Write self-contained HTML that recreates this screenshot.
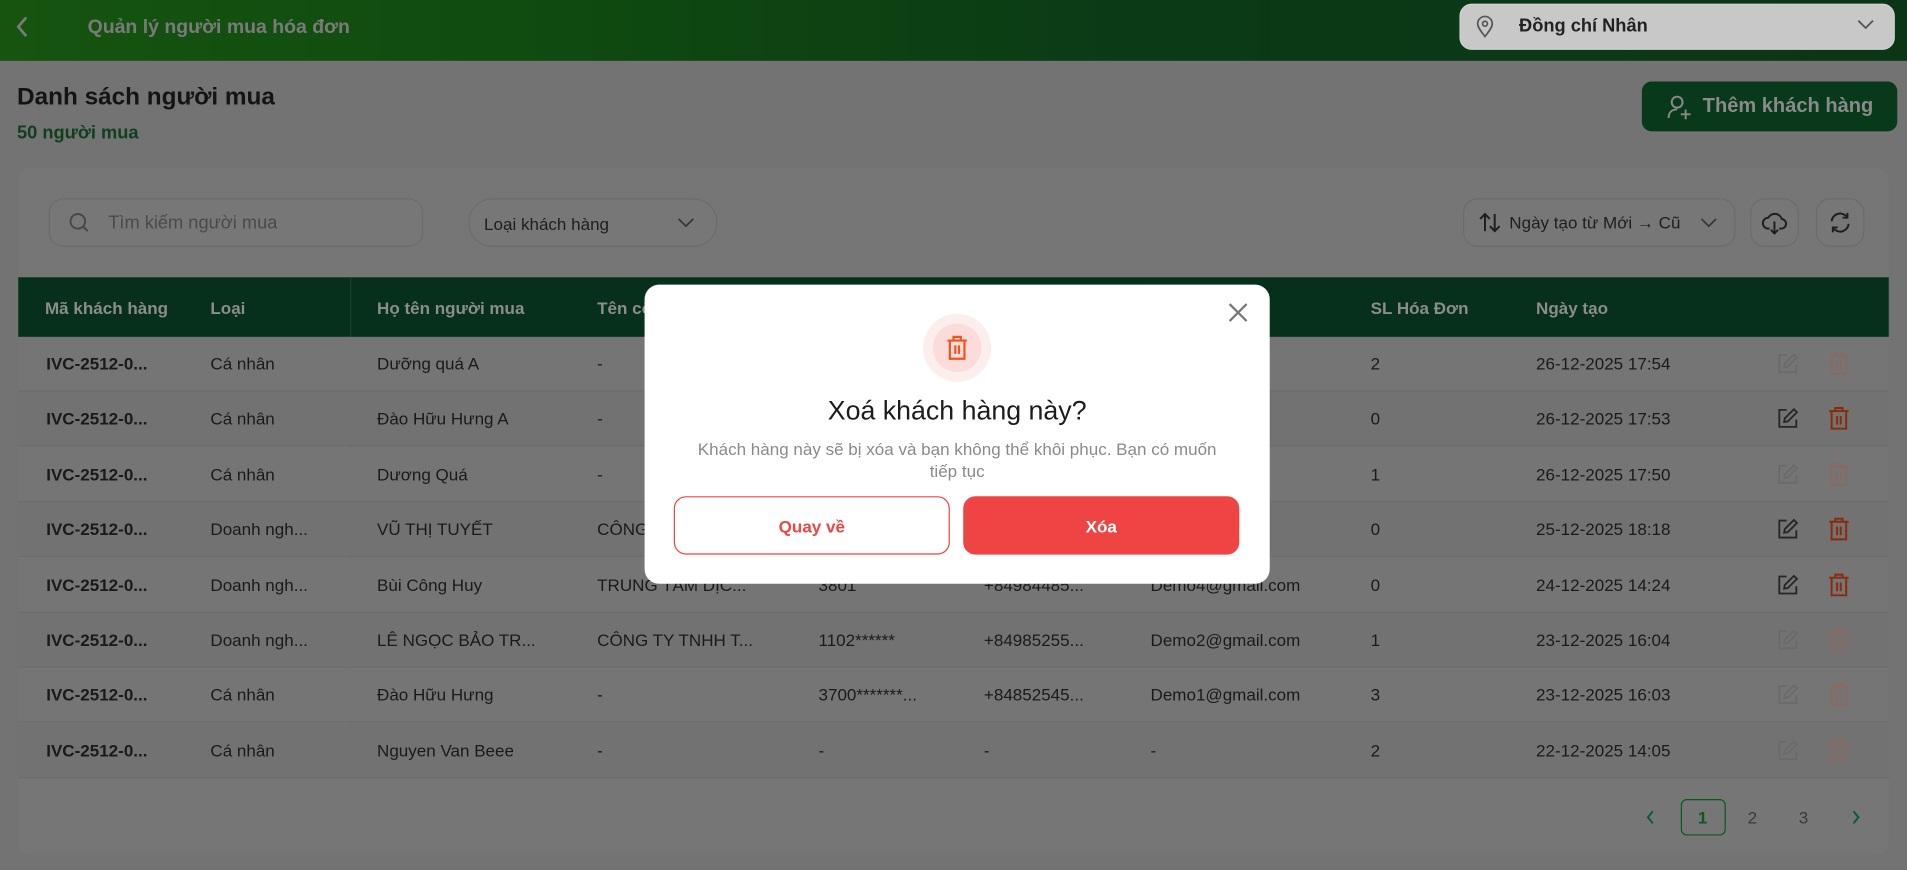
<!DOCTYPE html>
<html><head><meta charset="utf-8"><style>
*{box-sizing:border-box;margin:0;padding:0}
html,body{width:1907px;height:869px;overflow:hidden;background:#737373}
body{font-family:"Liberation Sans","Noto Sans CJK SC",sans-serif}
#s{position:absolute;left:0;top:0;width:1568px;height:715px;transform:scale(1.21620);transform-origin:0 0;background:#737373}
.a{position:absolute}
.top{left:0;top:0;width:1568px;height:50px;background:linear-gradient(90deg,#165410 0%,#0f4a10 30%,#0b3a16 60%,#0b3616 100%)}
.t{white-space:nowrap}
.card{left:15px;top:138px;width:1538px;height:565px;background:#767676;border-radius:10px}
.inp{border:1px solid #6c6c6c;background:#777;border-radius:12px}
.th{color:#8c8c8c;font-weight:bold;font-size:14px;top:245px}
.row{left:15px;width:1538px;height:45px;border-bottom:1px solid #6c6c6c}
.c{position:absolute;top:50%;transform:translateY(-50%);font-size:14px;color:#1a1a1a;white-space:nowrap}
</style></head><body><div id="s">
<div class="a top"></div>
<svg class="a" style="left:10px;top:12px" width="16" height="20" viewBox="0 0 16 20"><path d="M11 3 L5 10 L11 17" fill="none" stroke="#7b7b7b" stroke-width="2.2" stroke-linecap="round"/></svg>
<div class="a t" style="left:72px;top:14px;font-size:16px;font-weight:bold;color:#7a7a7a">Quản lý người mua hóa đơn</div>
<div class="a" style="left:1200px;top:3px;width:358px;height:38px;background:#c8c8c8;border-radius:10px;border:1px solid #d0d0d0"></div>
<svg class="a" style="left:1213px;top:12px" width="16" height="20" viewBox="0 0 16 20"><path d="M8 18 C4 13 2 10 2 7.5 A6 6 0 0 1 14 7.5 C14 10 12 13 8 18Z" fill="none" stroke="#555" stroke-width="1.4"/><circle cx="8" cy="7.5" r="2" fill="none" stroke="#555" stroke-width="1.4"/></svg>
<div class="a t" style="left:1249px;top:13px;font-size:15px;font-weight:bold;color:#222">Đồng chí Nhân</div>
<svg class="a" style="left:1527px;top:15px" width="14" height="10"><path d="M1 2 L7 8 L13 2" fill="none" stroke="#555" stroke-width="1.5"/></svg>

<div class="a t" style="left:14px;top:69px;font-size:20px;font-weight:bold;color:#141414">Danh sách người mua</div>
<div class="a t" style="left:14px;top:101px;font-size:15px;font-weight:bold;color:#0f3f1f">50 người mua</div>
<div class="a" style="left:1350px;top:67px;width:210px;height:41px;background:#08391b;border-radius:8px"></div>
<svg class="a" style="left:1370px;top:77px" width="22" height="22" viewBox="0 0 22 22"><circle cx="9" cy="7" r="4.5" fill="none" stroke="#8a8a8a" stroke-width="1.6"/><path d="M2 20 C2 15 5 13 9 13" fill="none" stroke="#8a8a8a" stroke-width="1.6"/><path d="M16 13 V21 M12 17 H20" stroke="#8a8a8a" stroke-width="1.6"/></svg>
<div class="a t" style="left:1400px;top:78px;font-size:16.5px;font-weight:bold;color:#8a8a8a">Thêm khách hàng</div>

<div class="a card"></div>
<div class="a inp" style="left:40px;top:163px;width:308px;height:40px"></div>
<svg class="a" style="left:56px;top:174px" width="18" height="18"><circle cx="8" cy="8" r="6" fill="none" stroke="#454545" stroke-width="1.5"/><path d="M12.5 12.5 L16 16" stroke="#454545" stroke-width="1.5"/></svg>
<div class="a t" style="left:89px;top:175px;font-size:15px;color:#4a4a4a">Tìm kiếm người mua</div>
<div class="a inp" style="left:385px;top:163px;width:205px;height:40px;border-radius:20px"></div>
<div class="a t" style="left:398px;top:176px;font-size:14px;color:#1e1e1e">Loại khách hàng</div>
<svg class="a" style="left:557px;top:178px" width="14" height="10"><path d="M1 2 L7 8 L13 2" fill="none" stroke="#333" stroke-width="1.4"/></svg>
<div class="a inp" style="left:1203px;top:163px;width:224px;height:40px"></div>
<svg class="a" style="left:1215px;top:174px" width="20" height="18"><path d="M6 16 V2 M2 6 L6 2 L10 6 M14 2 V16 M10 12 L14 16 L18 12" fill="none" stroke="#1e1e1e" stroke-width="1.6"/></svg>
<div class="a t" style="left:1241px;top:175px;font-size:14px;color:#1e1e1e">Ngày tạo từ Mới → Cũ</div>
<svg class="a" style="left:1398px;top:178px" width="14" height="10"><path d="M1 2 L7 8 L13 2" fill="none" stroke="#333" stroke-width="1.4"/></svg>
<div class="a inp" style="left:1439px;top:163px;width:40px;height:40px"></div>
<svg class="a" style="left:1448px;top:172px" width="22" height="22" viewBox="0 0 22 22"><path d="M7 16 H6 A4.5 4.5 0 0 1 6 7 A6 6 0 0 1 17 8 A4 4 0 0 1 16 16 H15" fill="none" stroke="#1e1e1e" stroke-width="1.6"/><path d="M11 10 V20 M8 17 L11 20 L14 17" fill="none" stroke="#1e1e1e" stroke-width="1.6"/></svg>
<div class="a inp" style="left:1493px;top:163px;width:40px;height:40px"></div>
<svg class="a" style="left:1502px;top:172px" width="22" height="22" viewBox="0 0 22 22"><path d="M4 10 A7 7 0 0 1 17 7 M18 12 A7 7 0 0 1 5 15" fill="none" stroke="#1e1e1e" stroke-width="1.6"/><path d="M17 3 V7 H13 M5 19 V15 H9" fill="none" stroke="#1e1e1e" stroke-width="1.6"/></svg>

<div class="a" style="left:15px;top:228px;width:1538px;height:49px;background:#06301b"></div>
<div class="a" style="left:288px;top:228px;width:1px;height:412px;background:#6a6a6a"></div>
<div class="a" style="left:288px;top:228px;width:1px;height:49px;background:#0a3a22"></div>
<div class="a t th" style="left:37px">Mã khách hàng</div>
<div class="a t th" style="left:173px">Loại</div>
<div class="a t th" style="left:310px">Họ tên người mua</div>
<div class="a t th" style="left:491px">Tên công ty</div>
<div class="a t th" style="left:1127px">SL Hóa Đơn</div>
<div class="a t th" style="left:1263px">Ngày tạo</div>

<div id="rows"></div>

<div class="a" style="left:1382px;top:657px;width:37px;height:30px;border:1.5px solid #0c5a1a;border-radius:5px"></div>
<div class="a t" style="left:1396px;top:664px;font-size:14px;color:#0c5a1a;font-weight:bold">1</div>
<div class="a t" style="left:1437px;top:664px;font-size:14px;color:#3a3a3a">2</div>
<div class="a t" style="left:1479px;top:664px;font-size:14px;color:#3a3a3a">3</div>
<svg class="a" style="left:1352px;top:665px" width="10" height="14"><path d="M7 2 L3 7 L7 12" fill="none" stroke="#0c5a3a" stroke-width="1.6"/></svg>
<svg class="a" style="left:1521px;top:665px" width="10" height="14"><path d="M3 2 L7 7 L3 12" fill="none" stroke="#0c5a3a" stroke-width="1.6"/></svg>

<div class="a" style="left:530px;top:234px;width:514px;height:246px;background:#fff;border-radius:12px"></div>
<svg class="a" style="left:1009px;top:248px" width="18" height="18"><path d="M2 2 L16 16 M16 2 L2 16" stroke="#777" stroke-width="1.8"/></svg>
<div class="a" style="left:759px;top:258px;width:56px;height:56px;border-radius:50%;background:#fdeeee"></div>
<div class="a" style="left:767px;top:266px;width:40px;height:40px;border-radius:50%;background:#fbdcdb"></div>
<svg class="a" style="left:777px;top:275px" width="20" height="22" viewBox="0 0 20 22"><path d="M2 5 H18 M7 5 V2 H13 V5 M4 5 V20 H16 V5 M8.5 9 V16 M11.5 9 V16" fill="none" stroke="#f0541e" stroke-width="1.8"/></svg>
<div class="a t" style="left:530px;width:514px;text-align:center;top:325px;font-size:22px;color:#1c1c1c">Xoá khách hàng này?</div>
<div class="a" style="left:555px;width:464px;text-align:center;top:360px;font-size:14px;line-height:18px;color:#8a8a8a">Khách hàng này sẽ bị xóa và bạn không thể khôi phục. Bạn có muốn<br>tiếp tục</div>
<div class="a" style="left:554px;top:408px;width:227px;height:48px;border:1px solid #ef4444;border-radius:10px"></div>
<div class="a t" style="left:554px;width:227px;text-align:center;top:425px;font-size:14px;font-weight:bold;color:#ef4444">Quay về</div>
<div class="a" style="left:792px;top:408px;width:227px;height:48px;background:#ef4444;border-radius:10px"></div>
<div class="a t" style="left:792px;width:227px;text-align:center;top:425px;font-size:14px;font-weight:bold;color:#fff">Xóa</div>
</div>
<script>
var d=[["Cá nhân","Dưỡng quá A","-","","","","2","26-12-2025 17:54",0],
["Cá nhân","Đào Hữu Hưng A","-","","","","0","26-12-2025 17:53",1],
["Cá nhân","Dương Quá","-","","","","1","26-12-2025 17:50",0],
["Doanh ngh...","VŨ THỊ TUYẾT","CÔNG","","","","0","25-12-2025 18:18",1],
["Doanh ngh...","Bùi Công Huy","TRUNG TÂM DỊC...","3801","+84984485...","Demo4@gmail.com","0","24-12-2025 14:24",1],
["Doanh ngh...","LÊ NGỌC BẢO TR...","CÔNG TY TNHH T...","1102******","+84985255...","Demo2@gmail.com","1","23-12-2025 16:04",0],
["Cá nhân","Đào Hữu Hưng","-","3700*******...","+84852545...","Demo1@gmail.com","3","23-12-2025 16:03",0],
["Cá nhân","Nguyen Van Beee","-","-","-","-","2","22-12-2025 14:05",0]];
var h="";var xs=[158,295,476,658,794,931,1112,1248];
d.forEach(function(r,i){var y=277+i*45.4;
h+='<div class="a row" style="top:'+y+'px;background:'+(i%2?'#727272':'#757575')+'">';
h+='<span class="c" style="left:23px;font-weight:bold">IVC-2512-0...</span>';
for(var k=0;k<8;k++)if(r[k])h+='<span class="c" style="left:'+xs[k]+'px">'+r[k]+'</span>';
var e=r[8]?'#262626':'#6a6a6a',t=r[8]?'#8a2a0a':'#8a6a60';
h+='<svg class="c" style="left:1446px" width="18" height="18" viewBox="0 0 18 18"><path d="M8 2 H2 V16 H16 V10" fill="none" stroke="'+e+'" stroke-width="1.5"/><path d="M14 1.5 L16.5 4 L9 11.5 L6 12 L6.5 9 Z" fill="none" stroke="'+e+'" stroke-width="1.5"/></svg>';
h+='<svg class="c" style="left:1488px" width="18" height="20" viewBox="0 0 18 20"><path d="M1 4 H17 M6 4 V1.5 H12 V4 M3 4 V18.5 H15 V4 M7.5 8 V15 M10.5 8 V15" fill="none" stroke="'+t+'" stroke-width="1.6"/></svg>';
h+='</div>';});
document.getElementById('rows').outerHTML=h;
</script>
</body></html>
